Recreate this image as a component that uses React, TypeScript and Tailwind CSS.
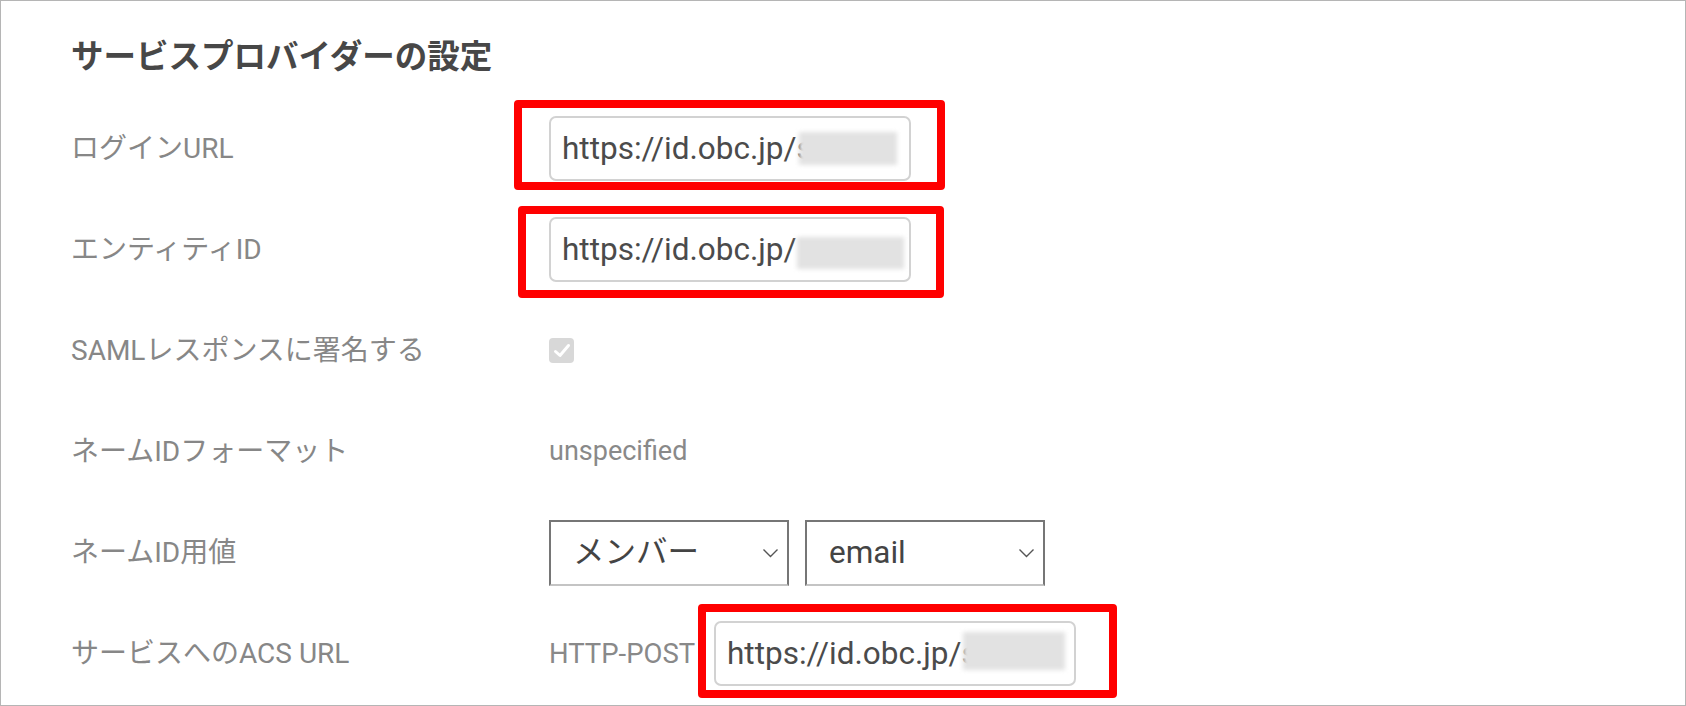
const font = "font-['Roboto','Noto_Sans_CJK_JP',sans-serif]";

function Blurred({ left, top, width, height }: { left: number; top: number; width: number; height: number }) {
  return (
    <span
      className="absolute bg-[#e2e2e2] blur-[2px]"
      style={{ left, top, width, height }}
    />
  );
}

function UrlBox({ text, blur }: { text: string; blur: { left: number; top: number; width: number; height: number } }) {
  return (
    <div className="relative flex h-[65px] w-[362px] items-center overflow-hidden rounded-[7px] border-2 border-[#d2d2d2] bg-white pl-[11px]">
      <span className="whitespace-nowrap text-[31.5px] leading-none text-[#4b4b4b]">{text}</span>
      <Blurred {...blur} />
    </div>
  );
}

// 赤枠（注釈）
function RedFrame({ left, top, width, height }: { left: number; top: number; width: number; height: number }) {
  return (
    <div
      className="pointer-events-none absolute rounded-[4px] border-[8px] border-[#ff0000]"
      style={{ left, top, width, height }}
    />
  );
}

function Chevron() {
  return (
    <svg width="17" height="10" viewBox="0 0 17 10" className="shrink-0">
      <path d="M1.5 1.5 L8.5 8.5 L15.5 1.5" fill="none" stroke="#555" strokeWidth="1.4" />
    </svg>
  );
}

function SelectBox({ value }: { value: string }) {
  return (
    <div className="flex h-[66px] w-[240px] items-center justify-between border-2 border-[#767676] border-b-[#c4c4c4] bg-white pl-[22px] pr-[8px]">
      <span className="text-[31.5px] leading-none text-[#444]">{value}</span>
      <Chevron />
    </div>
  );
}

function Row({ label, children }: { label: string; children: React.ReactNode }) {
  return (
    <div className="flex h-[101px] items-center">
      <div className="w-[478px] text-[28px] leading-none text-[#878787]">{label}</div>
      <div className="flex items-center">{children}</div>
    </div>
  );
}

export default function App() {
  return (
    <div className={`${font} relative h-[706px] w-[1686px] overflow-hidden border border-[#b5b5b5] bg-white pl-[70px] pt-[36px]`}>
      <h1 className="h-[40px] text-[32.5px] font-bold leading-[40px] text-[#474747]">サービスプロバイダーの設定</h1>

      <div className="mt-[21px]">
        <Row label="ログインURL">
          <UrlBox text="https://id.obc.jp/s" blur={{ left: 248, top: 14, width: 98, height: 33 }} />
        </Row>
        <Row label="エンティティID">
          <UrlBox text="https://id.obc.jp/" blur={{ left: 246, top: 18, width: 107, height: 32 }} />
        </Row>
        <Row label="SAMLレスポンスに署名する">
          <div className="flex h-[25px] w-[25px] items-center justify-center rounded-[4px] bg-[#d8d8d8]">
            <svg width="18" height="16" viewBox="0 0 18 16">
              <path d="M2.5 8.5 L7 12.5 L15.5 2.5" fill="none" stroke="#fff" strokeWidth="3" strokeLinecap="round" strokeLinejoin="round" />
            </svg>
          </div>
        </Row>
        <Row label="ネームIDフォーマット">
          <span className="text-[27px] leading-none text-[#898989]">unspecified</span>
        </Row>
        <Row label="ネームID用値">
          <div className="flex gap-[16px]">
            <SelectBox value="メンバー" />
            <SelectBox value="email" />
          </div>
        </Row>
        <Row label="サービスへのACS URL">
          <span className="w-[165px] text-[27.5px] leading-none text-[#898989]">HTTP-POST</span>
          <UrlBox text="https://id.obc.jp/s" blur={{ left: 247, top: 9, width: 102, height: 38 }} />
        </Row>
      </div>

      <RedFrame left={513} top={99} width={431} height={90} />
      <RedFrame left={517} top={205} width={426} height={92} />
      <RedFrame left={697} top={603} width={419} height={94} />
    </div>
  );
}
